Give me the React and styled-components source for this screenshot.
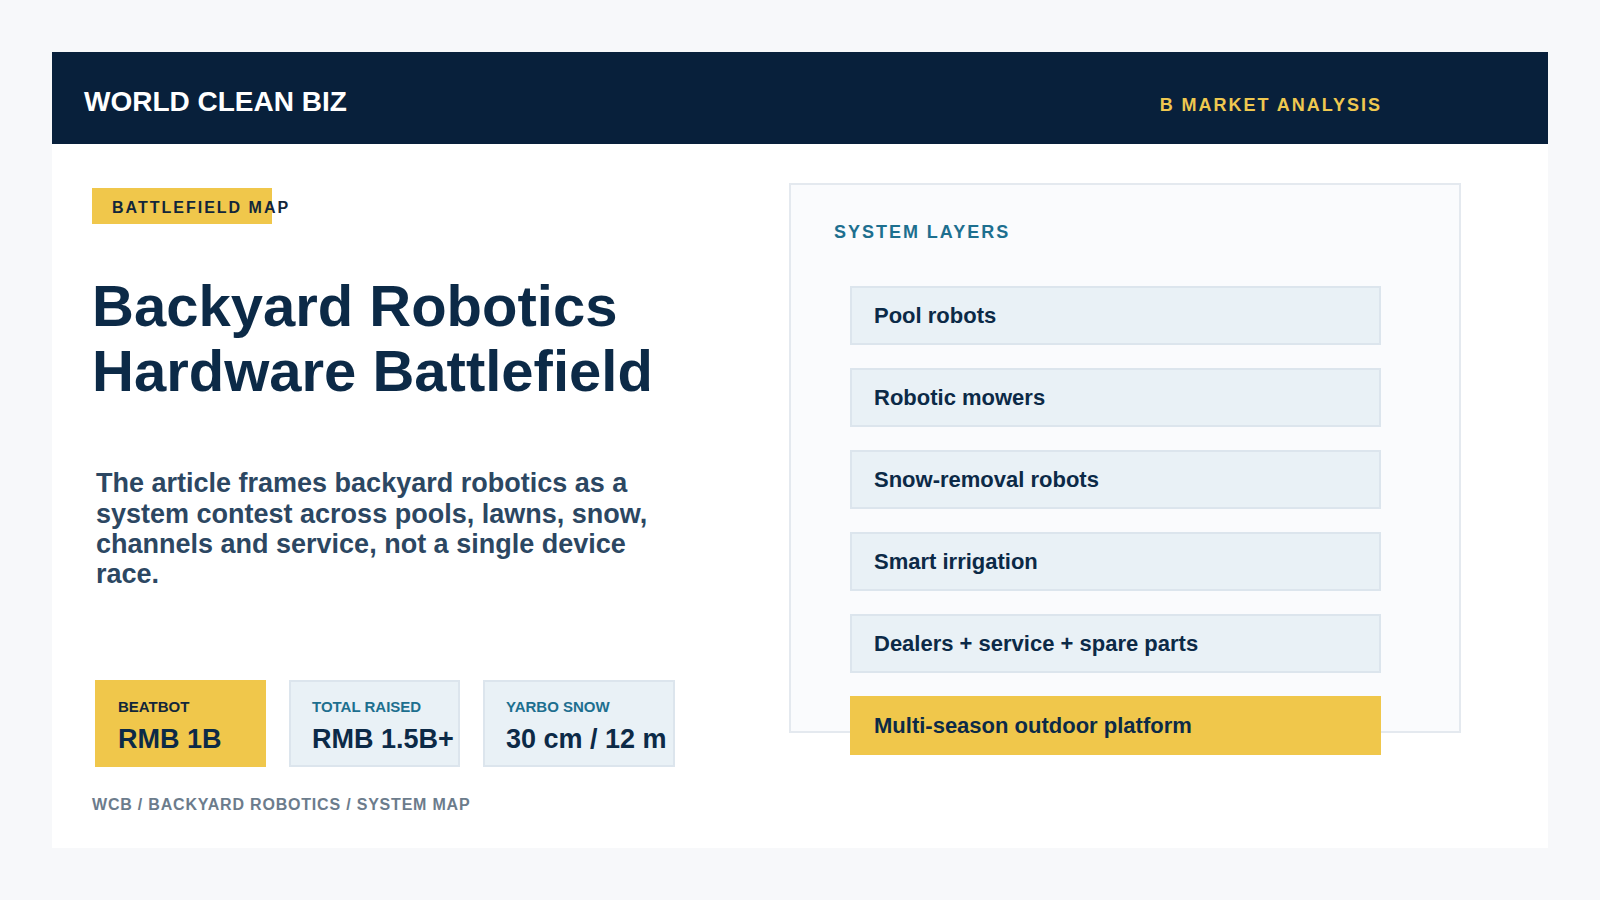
import React from 'react'
import styled, { createGlobalStyle } from 'styled-components'

const GlobalStyle = createGlobalStyle`
  html, body {
    margin: 0;
    padding: 0;
    background: #f7f8fa;
  }
  body {
    font-family: "Liberation Sans", Arial, sans-serif;
    overflow: hidden;
  }
`

const Page = styled.div`
  box-sizing: border-box;
  width: 1600px;
  height: 900px;
  padding: 52px;
  background: #f7f8fa;
`

const Slide = styled.div`
  height: 796px;
  background: #ffffff;
  display: flex;
  flex-direction: column;
`

const Header = styled.header`
  box-sizing: border-box;
  height: 92px;
  flex: none;
  padding: 0 166px 0 32px;
  background: #08203b;
  display: flex;
  align-items: center;
  justify-content: space-between;
`

const Logo = styled.div`
  color: #ffffff;
  font-size: 28px;
  font-weight: 700;
  margin-top: 7px;
`

const HeaderTag = styled.div`
  color: #efc850;
  font-size: 18px;
  font-weight: 700;
  letter-spacing: 0.11em;
  margin-top: 15px;
`

const Body = styled.div`
  flex: 1;
  display: grid;
  grid-template-columns: 697px 672px;
  padding: 39px 0 0 40px;
`

const LeftColumn = styled.div`
  padding-top: 5px;
`

const Badge = styled.div`
  box-sizing: border-box;
  width: 180px;
  height: 36px;
  padding: 4px 0 0 20px;
  display: flex;
  align-items: center;
  background: #f0c74b;
  color: #12263a;
  font-size: 16px;
  font-weight: 700;
  letter-spacing: 2px;
  white-space: nowrap;
`

const Title = styled.h1`
  margin: 49px 0 0;
  color: #0c2a47;
  font-size: 58px;
  line-height: 65px;
  font-weight: 700;
`

const Summary = styled.p`
  width: 570px;
  margin: 65.4px 0 0 4px;
  color: #2c4762;
  font-size: 27px;
  line-height: 30.2px;
  font-weight: 700;
`

const Stats = styled.div`
  display: flex;
  gap: 23px;
  margin: 90.6px 0 0 3px;
`

const Stat = styled.div`
  box-sizing: border-box;
  width: ${({ $width }) => $width}px;
  height: 87px;
  padding: 16px 0 0 21px;
  background: ${({ $accent }) => ($accent ? '#f0c74b' : '#e9f1f6')};
  border: 2px solid ${({ $accent }) => ($accent ? '#f0c74b' : '#dce5ed')};
  white-space: nowrap;
`

const StatLabel = styled.div`
  color: ${({ $accent }) => ($accent ? '#12263a' : '#1d6f8f')};
  font-size: 15px;
  line-height: 18px;
  font-weight: 700;
`

const StatValue = styled.div`
  margin-top: 7px;
  color: #0c2a47;
  font-size: 27px;
  line-height: 32px;
  font-weight: 700;
`

const Footer = styled.div`
  margin-top: 29px;
  color: #6c7c8c;
  font-size: 16px;
  line-height: 18px;
  font-weight: 700;
  letter-spacing: 0.05em;
  white-space: nowrap;
`

const Panel = styled.section`
  box-sizing: border-box;
  height: 550px;
  padding: 36px 0 0 43px;
  background: #fafbfd;
  border: 2px solid #e4e9ef;
`

const PanelTitle = styled.div`
  color: #1d6f8f;
  font-size: 18px;
  line-height: 22px;
  font-weight: 700;
  letter-spacing: 0.11em;
`

const Layers = styled.div`
  display: flex;
  flex-direction: column;
  gap: 23px;
  margin: 42.5px 0 0 15.5px;
`

const Layer = styled.div`
  box-sizing: border-box;
  width: 531.5px;
  height: 59px;
  padding: 1px 0 0 22.5px;
  display: flex;
  align-items: center;
  background: ${({ $accent }) => ($accent ? '#f0c74b' : '#e9f1f6')};
  border: 2px solid ${({ $accent }) => ($accent ? '#f0c74b' : '#dce5ed')};
  color: #0c2a47;
  font-size: 22px;
  font-weight: 700;
`

const STATS = [
  { label: 'BEATBOT', value: 'RMB 1B', width: 171, accent: true },
  { label: 'TOTAL RAISED', value: 'RMB 1.5B+', width: 171 },
  { label: 'YARBO SNOW', value: '30 cm / 12 m', width: 192 }
]

const LAYERS = [
  { name: 'Pool robots' },
  { name: 'Robotic mowers' },
  { name: 'Snow-removal robots' },
  { name: 'Smart irrigation' },
  { name: 'Dealers + service + spare parts' },
  { name: 'Multi-season outdoor platform', accent: true }
]

export default function App () {
  return <Page>
    <GlobalStyle />
    <Slide>
      <Header>
        <Logo>WORLD CLEAN BIZ</Logo>
        <HeaderTag>B MARKET ANALYSIS</HeaderTag>
      </Header>
      <Body>
        <LeftColumn>
          <Badge>BATTLEFIELD MAP</Badge>
          <Title>Backyard Robotics<br />Hardware Battlefield</Title>
          <Summary>
            The article frames backyard robotics as a system contest across pools, lawns, snow, channels and service, not a single device race.
          </Summary>
          <Stats>
            {STATS.map(({ label, value, width, accent }) => (
              <Stat key={label} $width={width} $accent={accent}>
                <StatLabel $accent={accent}>{label}</StatLabel>
                <StatValue>{value}</StatValue>
              </Stat>
            ))}
          </Stats>
          <Footer>WCB / BACKYARD ROBOTICS / SYSTEM MAP</Footer>
        </LeftColumn>
        <Panel>
          <PanelTitle>SYSTEM LAYERS</PanelTitle>
          <Layers>
            {LAYERS.map(({ name, accent }) => (
              <Layer key={name} $accent={accent}>{name}</Layer>
            ))}
          </Layers>
        </Panel>
      </Body>
    </Slide>
  </Page>
}
